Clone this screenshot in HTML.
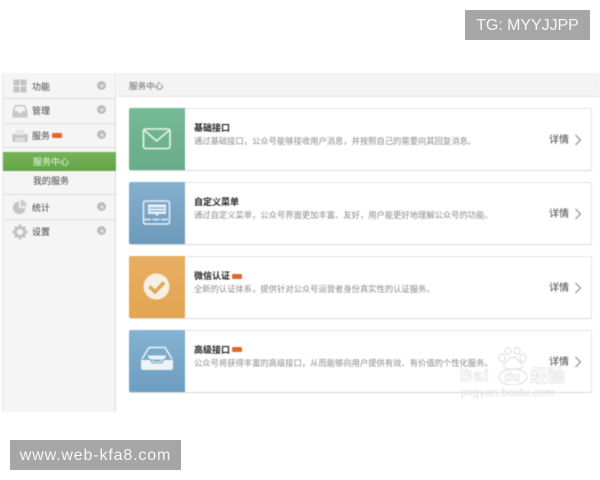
<!DOCTYPE html>
<html lang="zh"><head><meta charset="utf-8"><title>服务中心</title>
<style>
html,body{margin:0;padding:0;background:#fff}
body{width:600px;height:480px;overflow:hidden;position:relative;font-family:"Liberation Sans","Noto Sans CJK SC",sans-serif}
.a{position:absolute;white-space:nowrap}
#wrap{position:absolute;left:0;top:0;width:600px;height:480px;filter:blur(.4px)}
.side{left:2px;top:73px;width:114px;height:339px;background:#f5f5f5;border-left:1px solid #e8e8e8;border-right:1px solid #ddd;box-sizing:border-box}
.hl{height:1px;background:#dedede;left:3px;width:113px}
.m{font-size:9px;line-height:12px;color:#444;left:32px}
.dot{left:97px;width:9px;height:9px;border-radius:50%;background:#bcbcbc}
.dot:after{content:"";position:absolute;left:2.5px;top:3.5px;border-left:2px solid transparent;border-right:2px solid transparent;border-top:3px solid #f0f0f0}
.card{left:129px;width:463px;height:63px;background:#fff;border:1px solid #e3e3e3;border-bottom-color:#d8d8d8;border-radius:2px;box-sizing:border-box}
.blk{left:129px;width:56px;height:62px;border-radius:2px 0 0 2px}
.t{left:194px;font-size:9px;line-height:12px;font-weight:bold;color:#222}
.d{left:194px;font-size:8.3px;line-height:11px;color:#8a8a8a}
.x{left:549px;font-size:10px;line-height:12px;color:#444}
.new{width:10px;height:5px;background:#e0692a;border-radius:1px}
.wm{background:#a6a6a6;color:#f6f6f6;text-align:center}
</style></head><body>
<div id="wrap">
<div class="a side"></div>
<div class="a" style="left:117px;top:73px;width:483px;height:23px;background:#f3f3f3;border-bottom:1px solid #e6e6e6"></div>
<div class="a" style="left:129px;top:80px;font-size:8.6px;line-height:12px;color:#666">服务中心</div>

<div class="a hl" style="top:98px"></div>
<div class="a hl" style="top:123px"></div>
<div class="a hl" style="top:147px"></div>
<div class="a hl" style="top:194px"></div>
<div class="a hl" style="top:219px"></div>

<svg class="a" style="left:12px;top:78px" width="16" height="16"><path fill="#c4c4c4" d="M1.500 1.500h6v6h-6zM8.500 1.500h6v6h-6zM1.500 8.500h6v6h-6zM8.500 8.500h6v6h-6z"/></svg>
<svg class="a" style="left:12px;top:103px" width="16" height="16"><path fill="#c8c8c8" d="M3 2h10l2.500 6v6.500h-15V8z"/><path fill="#f4f4f4" d="M4 3.500h8L13.700 8H10.500L9.500 10h-3L5.500 8H2.300z"/></svg>
<svg class="a" style="left:12px;top:128px" width="16" height="16"><path fill="#c4c4c4" d="M0.500 6h15v8h-15z"/><path fill="#e6e6e6" d="M3.500 1.500h9V7h-9z"/><path fill="#f4f4f4" d="M3 10h10v1H3zM3 12h10v1H3z"/></svg>
<svg class="a" style="left:12px;top:199px" width="16" height="16"><path fill="#c4c4c4" d="M7 2.500A6.300 6.300 0 1 0 13.500 9H7z"/><path fill="#cccccc" d="M8.500 1A6 6 0 0 1 14.800 7.500H8.500z"/></svg>
<svg class="a" style="left:12px;top:224px" width="16" height="16"><circle cx="8" cy="8" r="4.500" fill="none" stroke="#c2c2c2" stroke-width="3"/><path stroke="#c2c2c2" stroke-width="2.500" d="M8 .5v3M8 12.500v3M.5 8h3M12.500 8h3M2.700 2.700l2 2M11.300 11.300l2 2M13.300 2.700l-2 2M4.700 11.300l-2 2"/></svg>

<div class="a m" style="top:81px">功能</div>
<div class="a m" style="top:105px">管理</div>
<div class="a m" style="top:130px">服务</div>
<div class="a new" style="left:52px;top:133px"></div>
<div class="a m" style="top:202px">统计</div>
<div class="a m" style="top:226px">设置</div>

<div class="a dot" style="top:81px"></div>
<div class="a dot" style="top:105px"></div>
<div class="a dot" style="top:130px"></div>
<div class="a dot" style="top:202px"></div>
<div class="a dot" style="top:226px"></div>

<div class="a" style="left:3px;top:152px;width:113px;height:19px;background:linear-gradient(#78b25a,#62a646)"></div>
<div class="a m" style="left:33px;top:156px;color:#eef7e8">服务中心</div>
<div class="a m" style="left:33px;top:175px">我的服务</div>

<div class="a card" style="top:108px"></div>
<div class="a card" style="top:182px"></div>
<div class="a card" style="top:256px"></div>
<div class="a card" style="top:330px"></div>

<div class="a blk" style="top:108px;background:linear-gradient(#75bb95,#69ac88)"></div>
<div class="a blk" style="top:182px;background:linear-gradient(#85afcf,#6d9aba)"></div>
<div class="a blk" style="top:256px;background:linear-gradient(#e8ae62,#e3a552)"></div>
<div class="a blk" style="top:330px;background:linear-gradient(#84b2d2,#6d9dbf)"></div>

<svg class="a" style="left:142px;top:127px" width="30" height="24"><rect x="1.500" y="2" width="26.500" height="19.500" rx="2" fill="none" stroke="#eaf7ef" stroke-width="1.600"/><path d="M2.500 3.500L14.700 14 27 3.500" fill="none" stroke="#eaf7ef" stroke-width="1.500"/></svg>
<svg class="a" style="left:142px;top:200px" width="30" height="26"><rect x="1.500" y="1" width="26" height="23" rx="2" fill="none" stroke="#e6f0f7" stroke-width="1.500"/><path d="M6 4.500h18V14H17l-2 2-2-2H6z" fill="#e6f0f7"/><path d="M7.500 8h15M7.500 11h15" stroke="#78a3c3" stroke-width="1"/><path d="M2 19.500h25" stroke="#e6f0f7" stroke-width="1.500" stroke-dasharray="7 1.500"/></svg>
<svg class="a" style="left:143px;top:273px" width="28" height="28"><circle cx="13.500" cy="13.500" r="13" fill="#f7efe2"/><path d="M6.500 13.500l5.500 5.500L21 9.500" fill="none" stroke="#dfa556" stroke-width="3.500"/></svg>
<svg class="a" style="left:140px;top:345px" width="34" height="27"><path d="M2 14L9 2.500h16L32 14" fill="none" stroke="#eef3f7" stroke-width="1.500"/><path d="M1 15h9l2 3.500h10l2-3.500h9v8a2 2 0 0 1-2 2H3a2 2 0 0 1-2-2z" fill="#eef3f7"/><path d="M7.500 10.500h19l-2 3.500H9.500z" fill="#eef3f7"/><path d="M12 14h10l-1 3h-8z" fill="none" stroke="#eef3f7"/></svg>

<div class="a t" style="top:122px">基础接口</div>
<div class="a d" style="top:136px">通过基础接口，公众号能够接收用户消息，并按照自己的需要向其回复消息。</div>
<div class="a t" style="top:196px">自定义菜单</div>
<div class="a d" style="top:210px">通过自定义菜单，公众号界面更加丰富、友好，用户能更好地理解公众号的功能。</div>
<div class="a t" style="top:270px">微信认证</div>
<div class="a new" style="left:232px;top:274px"></div>
<div class="a d" style="top:284px">全新的认证体系，提供针对公众号运营者身份真实性的认证服务。</div>
<div class="a t" style="top:344px">高级接口</div>
<div class="a new" style="left:232px;top:347px"></div>
<div class="a d" style="top:358px">公众号将获得丰富的高级接口，从而能够向用户提供有效、有价值的个性化服务。</div>

<div class="a x" style="top:135px">详情</div>
<div class="a x" style="top:209px">详情</div>
<div class="a x" style="top:283px">详情</div>
<div class="a x" style="top:357px">详情</div>
<svg class="a" style="left:574px;top:134px" width="8" height="12"><path d="M1.500 1l5 5-5 5" fill="none" stroke="#9a9a9a" stroke-width="1.300"/></svg>
<svg class="a" style="left:574px;top:208px" width="8" height="12"><path d="M1.500 1l5 5-5 5" fill="none" stroke="#9a9a9a" stroke-width="1.300"/></svg>
<svg class="a" style="left:574px;top:282px" width="8" height="12"><path d="M1.500 1l5 5-5 5" fill="none" stroke="#9a9a9a" stroke-width="1.300"/></svg>
<svg class="a" style="left:574px;top:356px" width="8" height="12"><path d="M1.500 1l5 5-5 5" fill="none" stroke="#9a9a9a" stroke-width="1.300"/></svg>

<!-- Baidu watermark -->
<svg class="a" style="left:495px;top:347px" width="36" height="38" fill="none" stroke="#dcdcdc" stroke-width="1"><ellipse cx="7" cy="11" rx="3" ry="4"/><ellipse cx="13" cy="4" rx="3" ry="3.500"/><ellipse cx="22" cy="4" rx="3" ry="3.500"/><ellipse cx="28" cy="11" rx="3" ry="4"/><path d="M18 10c-4 0-5 4-8 6-3 3 0 7 4 6h8c4 1 7-3 4-6-3-2-4-6-8-6z"/><ellipse cx="18" cy="30" rx="14" ry="8"/></svg>
<div class="a" style="left:460px;top:367px;font-size:17px;line-height:18px;font-weight:bold;color:#fff;-webkit-text-stroke:.6px #d6d6d6;letter-spacing:1px">Bai</div>
<div class="a" style="left:504px;top:370px;font-size:13px;line-height:14px;font-weight:bold;color:#fff;-webkit-text-stroke:.5px #d6d6d6">du</div>
<div class="a" style="left:530px;top:367px;font-size:17.500px;line-height:18px;font-weight:bold;color:#fff;-webkit-text-stroke:.5px #d6d6d6">经验</div>
<div class="a" style="left:461px;top:387px;font-size:11px;line-height:12px;letter-spacing:.3px;color:#dedede">jingyan.baidu.com</div>
</div>

<div class="a wm" style="left:465px;top:10px;width:125px;height:30px;font-size:16px;line-height:31px;letter-spacing:-.05px">TG: MYYJJPP</div>
<div class="a wm" style="left:10px;top:440px;width:171px;height:30px;font-size:16px;line-height:31px;letter-spacing:.85px">www.web-kfa8.com</div>
</body></html>
